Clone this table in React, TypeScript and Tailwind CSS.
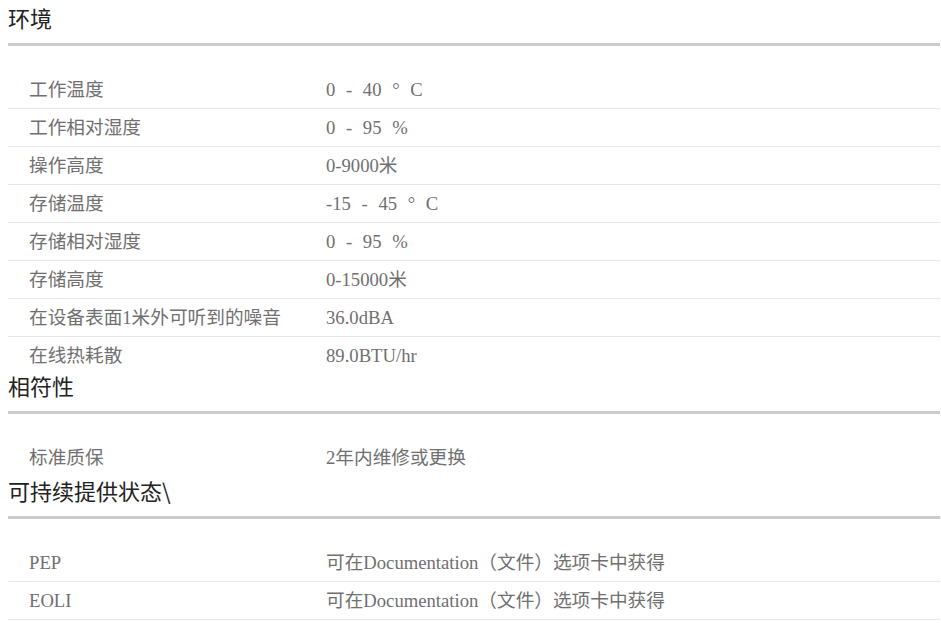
type Row = { label: string; value: string };

type Section = {
  title: string;
  rows: Row[];
  // how tall the final row is; 38 means a full row with its bottom line
  lastRowHeight: number;
};

const sections: Section[] = [
  {
    title: "环境",
    lastRowHeight: 31,
    rows: [
      { label: "工作温度", value: "0 - 40 ° C" },
      { label: "工作相对湿度", value: "0 - 95 %" },
      { label: "操作高度", value: "0-9000米" },
      { label: "存储温度", value: "-15 - 45 ° C" },
      { label: "存储相对湿度", value: "0 - 95 %" },
      { label: "存储高度", value: "0-15000米" },
      { label: "在设备表面1米外可听到的噪音", value: "36.0dBA" },
      { label: "在线热耗散", value: "89.0BTU/hr" },
    ],
  },
  {
    title: "相符性",
    lastRowHeight: 34,
    rows: [{ label: "标准质保", value: "2年内维修或更换" }],
  },
  {
    title: "可持续提供状态\\",
    lastRowHeight: 38,
    rows: [
      { label: "PEP", value: "可在Documentation（文件）选项卡中获得" },
      { label: "EOLI", value: "可在Documentation（文件）选项卡中获得" },
    ],
  },
];

const SpecRow = ({ row, last, height }: { row: Row; last: boolean; height: number }) => {
  const full = !last || height >= 38;
  return (
    <div
      className={`grid grid-cols-[318px_1fr] ${
        full ? "h-[38px] border-b border-[#e6e6e6]" : ""
      }`}
      style={full ? undefined : { height }}
    >
      <div className="pl-[21px] leading-[37px] whitespace-nowrap">{row.label}</div>
      <div className="leading-[37px] whitespace-nowrap [word-spacing:6px]">{row.value}</div>
    </div>
  );
};

const SpecSection = ({ section }: { section: Section }) => {
  return (
    <div>
      <div className="h-[43px] pt-[2px] text-[22px] leading-[30px] text-[#222] font-['Noto_Sans_CJK_SC',sans-serif]">
        {section.title}
      </div>
      <div className="h-[3px] bg-[#cccccc]" />
      <div className="mt-[25px] text-[18.67px] text-[#707070] font-['Liberation_Serif','Noto_Sans_CJK_SC',serif]">
        {section.rows.map((row, i) => (
          <SpecRow
            key={row.label}
            row={row}
            last={i === section.rows.length - 1}
            height={section.lastRowHeight}
          />
        ))}
      </div>
    </div>
  );
};

const App = () => {
  return (
    <div className="min-h-[635px] w-full bg-white">
      <div className="ml-2 mr-[1px]">
        {sections.map((s) => (
          <SpecSection key={s.title} section={s} />
        ))}
      </div>
    </div>
  );
};

export default App;
